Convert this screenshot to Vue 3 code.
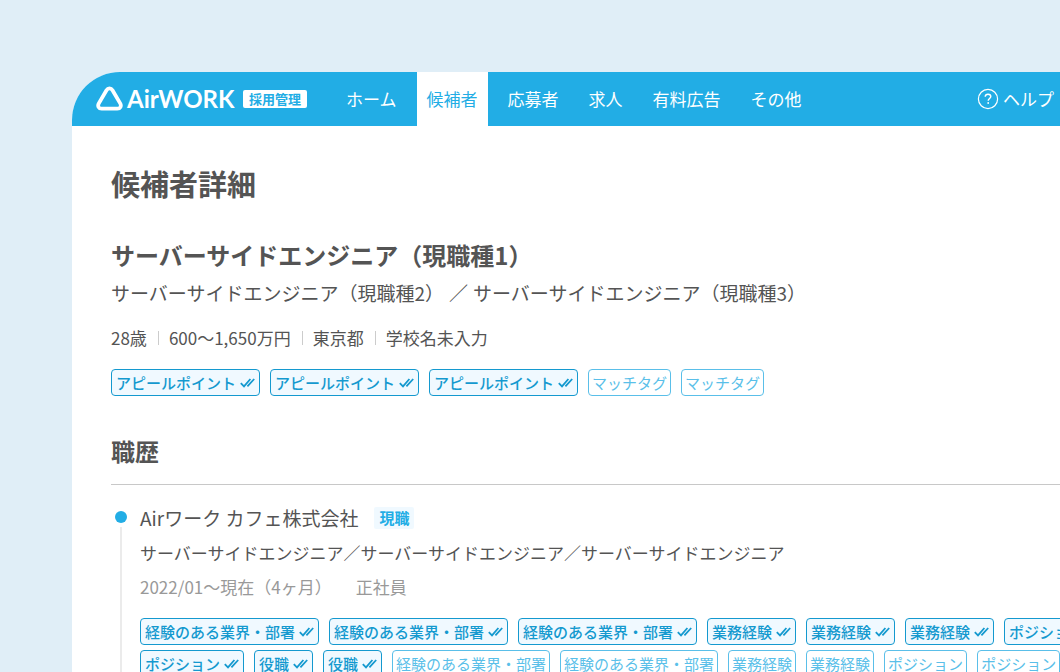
<script setup>
const nav = [
  { label: 'ホーム' },
  { label: '候補者', active: true },
  { label: '応募者' },
  { label: '求人' },
  { label: '有料広告' },
  { label: 'その他' },
]

const profile = ['28歳', '600〜1,650万円', '東京都', '学校名未入力']

const on = (label) => ({ label, matched: true })
const off = (label) => ({ label, matched: false })

const appealTags = [
  on('アピールポイント'),
  on('アピールポイント'),
  on('アピールポイント'),
  off('マッチタグ'),
  off('マッチタグ'),
]

const careerTagRows = [
  [
    on('経験のある業界・部署'),
    on('経験のある業界・部署'),
    on('経験のある業界・部署'),
    on('業務経験'),
    on('業務経験'),
    on('業務経験'),
    on('ポジション'),
  ],
  [
    on('ポジション'),
    on('役職'),
    on('役職'),
    off('経験のある業界・部署'),
    off('経験のある業界・部署'),
    off('業務経験'),
    off('業務経験'),
    off('ポジション'),
    off('ポジション'),
  ],
]
</script>

<template>
  <div class="stage">
    <div class="window">
      <header class="header">
        <a class="brand" href="#">
          <svg class="brand-mark" width="27" height="26" viewBox="0 0 27 26" aria-hidden="true">
            <path
              d="M10.5 4.2C12 1.7 15 1.7 16.5 4.2L24.2 17.4C25.7 20.1 24.3 22.7 21.3 22.7H5.7C2.7 22.7 1.3 20.1 2.8 17.4Z"
              fill="none" stroke="#fff" stroke-width="3.8" stroke-linejoin="round"
            />
          </svg>
          <span class="brand-name">AirWORK</span>
          <span class="brand-sub">採用管理</span>
        </a>
        <nav class="nav">
          <a v-for="item in nav" :key="item.label" class="nav-item" :class="{ active: item.active }" href="#">{{ item.label }}</a>
        </nav>
        <a class="help" href="#">
          <svg width="22" height="22" viewBox="0 0 22 22" fill="none" stroke="#fff" aria-hidden="true">
            <circle cx="11" cy="11" r="9.6" stroke-width="1.2" />
            <path d="M8.2 8.8C8.3 7.2 9.5 6.3 11 6.3S13.8 7.2 13.8 8.6C13.8 10.4 11.2 10.6 11.2 12.7" stroke-width="1.4" />
            <circle cx="11.2" cy="15" r="0.9" fill="#fff" stroke="none" />
          </svg>
          <span>ヘルプ</span>
        </a>
      </header>

      <main class="content">
        <h1 class="page-title">候補者詳細</h1>

        <h2 class="job-title">サーバーサイドエンジニア（現職種1）</h2>
        <p class="job-others">
          <span>サーバーサイドエンジニア（現職種2）</span>
          <span>／</span>
          <span>サーバーサイドエンジニア（現職種3）</span>
        </p>
        <ul class="profile">
          <li v-for="p in profile" :key="p">{{ p }}</li>
        </ul>
        <ul class="tags">
          <li v-for="(tag, i) in appealTags" :key="i" class="tag" :class="{ matched: tag.matched }">
            <span>{{ tag.label }}</span>
            <svg v-if="tag.matched" width="15" height="10" viewBox="0 0 15 10" aria-hidden="true">
              <path d="M0.8 5.2L4 8.4L10.4 1M7.4 8.4L14.2 1" />
            </svg>
          </li>
        </ul>

        <h2 class="section-title">職歴</h2>
        <section class="career">
          <div class="timeline">
            <span class="dot"></span>
            <span class="rail"></span>
          </div>
          <div class="career-body">
            <div class="company">
              <h3 class="company-name">Airワーク カフェ株式会社</h3>
              <span class="current">現職</span>
            </div>
            <p class="roles">サーバーサイドエンジニア／サーバーサイドエンジニア／サーバーサイドエンジニア</p>
            <p class="period">
              <span>2022/01〜現在（4ヶ月）</span>
              <span>正社員</span>
            </p>
            <ul v-for="(row, r) in careerTagRows" :key="r" class="tags career-tags">
              <li v-for="(tag, i) in row" :key="i" class="tag" :class="{ matched: tag.matched }">
                <span>{{ tag.label }}</span>
                <svg v-if="tag.matched" width="15" height="10" viewBox="0 0 15 10" aria-hidden="true">
                  <path d="M0.8 5.2L4 8.4L10.4 1M7.4 8.4L14.2 1" />
                </svg>
              </li>
            </ul>
          </div>
        </section>
      </main>
    </div>
  </div>
</template>

<style>
body {
  margin: 0;
  background: #e0eef7;
}
</style>

<style scoped>
.stage {
  box-sizing: border-box;
  height: 100vh;
  padding: 72px 0 0 72px;
  overflow: hidden;
  background: #e0eef7;
  color: #545454;
  font-family: "Noto Sans CJK JP", sans-serif;
  font-size: 17px;
  line-height: 24px;
}
h1, h2, h3, p, ul {
  margin: 0;
  padding: 0;
}
ul {
  list-style: none;
}
a {
  color: inherit;
  text-decoration: none;
}
.window {
  display: flex;
  flex-direction: column;
  height: 100%;
  overflow: hidden;
  background: #fff;
  border-top-left-radius: 48px;
  white-space: nowrap;
}
.header {
  display: flex;
  flex: none;
  height: 54px;
  padding: 0 6px 0 24px;
  background: #22ade5;
  color: #fff;
}
.brand {
  display: flex;
  align-items: center;
  margin-right: 29px;
}
.brand-name {
  margin-left: 4px;
  width: 109px;
  font-family: Lato, sans-serif;
  font-size: 24px;
  font-weight: 700;
}
.brand-sub {
  margin-left: 7px;
  padding: 0 6px;
  border-radius: 2px;
  background: #fff;
  color: #22ade5;
  font-size: 13px;
  font-weight: 700;
  line-height: 18px;
}
.nav {
  display: flex;
  gap: 10px;
}
.nav-item {
  display: flex;
  align-items: center;
  padding: 0 10px;
}
.nav-item.active {
  background: #fff;
  color: #22ade5;
}
.help {
  display: flex;
  align-items: center;
  gap: 4px;
  margin-left: auto;
}
.content {
  display: flex;
  flex: 1;
  flex-direction: column;
  min-height: 0;
  padding: 35px 0 0 39px;
}
.page-title {
  font-size: 29px;
  line-height: 44px;
}
.job-title {
  margin-top: 32px;
  font-size: 24px;
  line-height: 36px;
}
.job-others {
  display: flex;
  gap: 5px;
  margin-top: 5px;
  font-size: 19px;
  line-height: 30px;
}
.profile {
  display: flex;
  margin-top: 18px;
}
.profile li {
  display: flex;
  align-items: center;
}
.profile li + li::before {
  content: "";
  width: 1px;
  height: 14px;
  margin: 0 10px 0 11px;
  background: #ccc;
}
.tags {
  display: flex;
  flex: none;
  gap: 10px;
  margin-top: 19px;
}
.tag {
  display: flex;
  flex: none;
  align-items: center;
  gap: 4px;
  box-sizing: border-box;
  height: 27px;
  padding: 0 3px;
  border: 1px solid #5abfe9;
  border-radius: 4px;
  color: #5abfe9;
  font-size: 15px;
}
.tag.matched {
  padding: 0 4px;
  border-color: #1499cf;
  background: #f0f9ff;
  color: #1499cf;
  font-weight: 500;
}
.tag path {
  fill: none;
  stroke: currentColor;
  stroke-width: 1.8;
}
.section-title {
  margin-top: 37px;
  padding-bottom: 15px;
  border-bottom: 1px solid #c8c8c8;
  font-size: 24px;
  line-height: 36px;
}
.career {
  display: flex;
  flex: 1;
  gap: 9px;
  min-height: 0;
}
.timeline {
  display: flex;
  flex-direction: column;
  align-items: center;
  width: 20px;
  padding-top: 26px;
}
.dot {
  width: 12px;
  height: 12px;
  border-radius: 50%;
  background: #22ade5;
}
.rail {
  flex: 1;
  width: 2px;
  margin-top: 4px;
  background: #ebebeb;
}
.career-body {
  flex: 1;
  min-width: 0;
}
.company {
  display: flex;
  align-items: center;
  gap: 16px;
  margin-top: 18px;
}
.company-name {
  font-size: 19px;
  font-weight: 400;
  line-height: 30px;
}
.current {
  padding: 0 5px;
  border-radius: 2px;
  background: #f0f9ff;
  color: #22ade5;
  font-size: 15px;
  font-weight: 700;
  line-height: 22px;
}
.roles {
  margin-top: 8px;
}
.period {
  display: flex;
  gap: 24px;
  margin-top: 10px;
  color: #999;
}
.career-tags {
  margin-top: 5px;
}
.period + .career-tags {
  margin-top: 19px;
}
</style>
